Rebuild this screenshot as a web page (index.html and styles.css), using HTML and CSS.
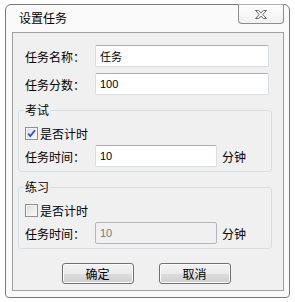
FILE: index.html
```html
<!DOCTYPE html>
<html>
<head>
	<meta charset="utf-8">
	<title>设置任务</title>
	<link rel="stylesheet" href="styles.css">
</head>
<body>
	<div class="window">
		<div class="titlebar">
			<span class="title">设置任务</span>
			<span class="close">
				<svg width="14" height="11" viewBox="0 0 14 11"><polygon points="1.5,1.5 4.5,1.5 7,3.8 9.5,1.5 12.5,1.5 8.8,5.5 12.5,9.5 9.5,9.5 7,7.2 4.5,9.5 1.5,9.5 5.2,5.5" fill="#f4f4f4" stroke="#6a6a6a" stroke-width="1"/></svg>
			</span>
		</div>
		<div class="panel">
			<div class="row top">
				<span class="label">任务名称：</span>
				<input class="text" type="text" value="任务">
			</div>
			<div class="row top second">
				<span class="label">任务分数：</span>
				<input class="text" type="text" value="100">
			</div>

			<fieldset class="group">
				<legend>考试</legend>
				<div class="check-row">
					<span class="check on">
						<svg width="11" height="11" viewBox="0 0 11 11"><path d="M2 5.5 L4.3 8 L9 2.2" fill="none" stroke="#2a56b8" stroke-width="1.8"/></svg>
					</span>
					<span>是否计时</span>
				</div>
				<div class="row">
					<span class="label">任务时间：</span>
					<input class="text short" type="text" value="10">
					<span class="unit">分钟</span>
				</div>
			</fieldset>

			<fieldset class="group">
				<legend>练习</legend>
				<div class="check-row">
					<span class="check"></span>
					<span>是否计时</span>
				</div>
				<div class="row">
					<span class="label">任务时间：</span>
					<input class="text short" type="text" value="10" disabled>
					<span class="unit">分钟</span>
				</div>
			</fieldset>

			<div class="buttons">
				<button class="btn">确定</button>
				<button class="btn">取消</button>
			</div>
		</div>
	</div>
</body>
</html>
```

FILE: styles.css
```css
body, html {
	margin: 0;
	background-color: #ffffff;
	font-family: "Noto Sans CJK SC", "Liberation Sans", sans-serif;
	font-size: 12px;
	color: #000;
}
.window {
	box-sizing: border-box;
	width: 285px;
	height: 294px;
	margin: 4px 0 0 5px;
	border: 1px solid #7a7a7a;
	border-radius: 6px 6px 4px 4px;
	background-color: #fafafa;
	padding: 0 5px 6px 6px;
	display: flex;
	flex-direction: column;
}
.titlebar {
	height: 27px;
	display: flex;
	justify-content: space-between;
	align-items: flex-start;
}
.title {
	padding: 5px 0 0 7px;
	line-height: 16px;
}
.close {
	box-sizing: border-box;
	width: 46px;
	height: 20px;
	margin-top: -1px;
	border: 1px solid #8c8c8c;
	border-top-color: #b0b0b0;
	border-radius: 0 0 4px 4px;
	background: linear-gradient(#fdfdfd, #f1f1f1);
	display: flex;
	align-items: center;
	justify-content: center;
}
.panel {
	flex: 1;
	border: 1px solid #a0a0a0;
	background-color: #f0f0f0;
	padding: 12px 11px 0 5px;
}
.row {
	display: flex;
	align-items: center;
	height: 22px;
}
.row.top {
	padding: 0 3px 0 7px;
}
.row.second {
	margin-top: 6px;
}
.label {
	width: 70px;
	flex: none;
}
.text {
	box-sizing: border-box;
	flex: 1;
	min-width: 0;
	height: 22px;
	margin: 0;
	padding: 0 4px;
	border: 1px solid #d9dde4;
	border-top-color: #abadb3;
	border-radius: 2px;
	background-color: #fff;
	font-family: "Liberation Sans", "Noto Sans CJK SC", sans-serif;
	font-size: 11px;
	color: #000;
	outline: none;
}
.text.short {
	flex: none;
	width: 122px;
}
.text:disabled {
	background-color: #f0f0f0;
	border-color: #b3b7bb;
	color: #7a7a7a;
}
.unit {
	margin-left: 5px;
}
.group {
	margin: 7px 0 0;
	min-width: 0;
	border: 1px solid #d5dfe5;
	border-radius: 3px;
	padding: 6px 0 4px 6px;
}
.group legend {
	padding: 0 1px;
	margin-left: -1px;
	line-height: 16px;
}
.check-row {
	display: flex;
	align-items: center;
	height: 19px;
	margin-bottom: 2px;
	gap: 2px;
}
.check {
	box-sizing: border-box;
	width: 13px;
	height: 13px;
	border: 1px solid #8e8f8f;
	background: linear-gradient(135deg, #dcdcdc, #fbfbfb);
	box-shadow: inset 0 0 0 1px #f4f4f4;
	display: flex;
	align-items: center;
	justify-content: center;
}
.buttons {
	display: flex;
	justify-content: center;
	gap: 25px;
	margin-top: 14px;
	padding-left: 2px;
}
.btn {
	box-sizing: border-box;
	width: 72px;
	height: 21px;
	border: 1px solid #707070;
	border-radius: 3px;
	background: linear-gradient(#f2f2f2 0%, #ebebeb 50%, #dddddd 50%, #cfcfcf 100%);
	box-shadow: inset 0 0 0 1px #fcfcfc;
	font-family: "Noto Sans CJK SC", sans-serif;
	font-size: 12px;
	color: #000;
	padding: 0;
}
```
